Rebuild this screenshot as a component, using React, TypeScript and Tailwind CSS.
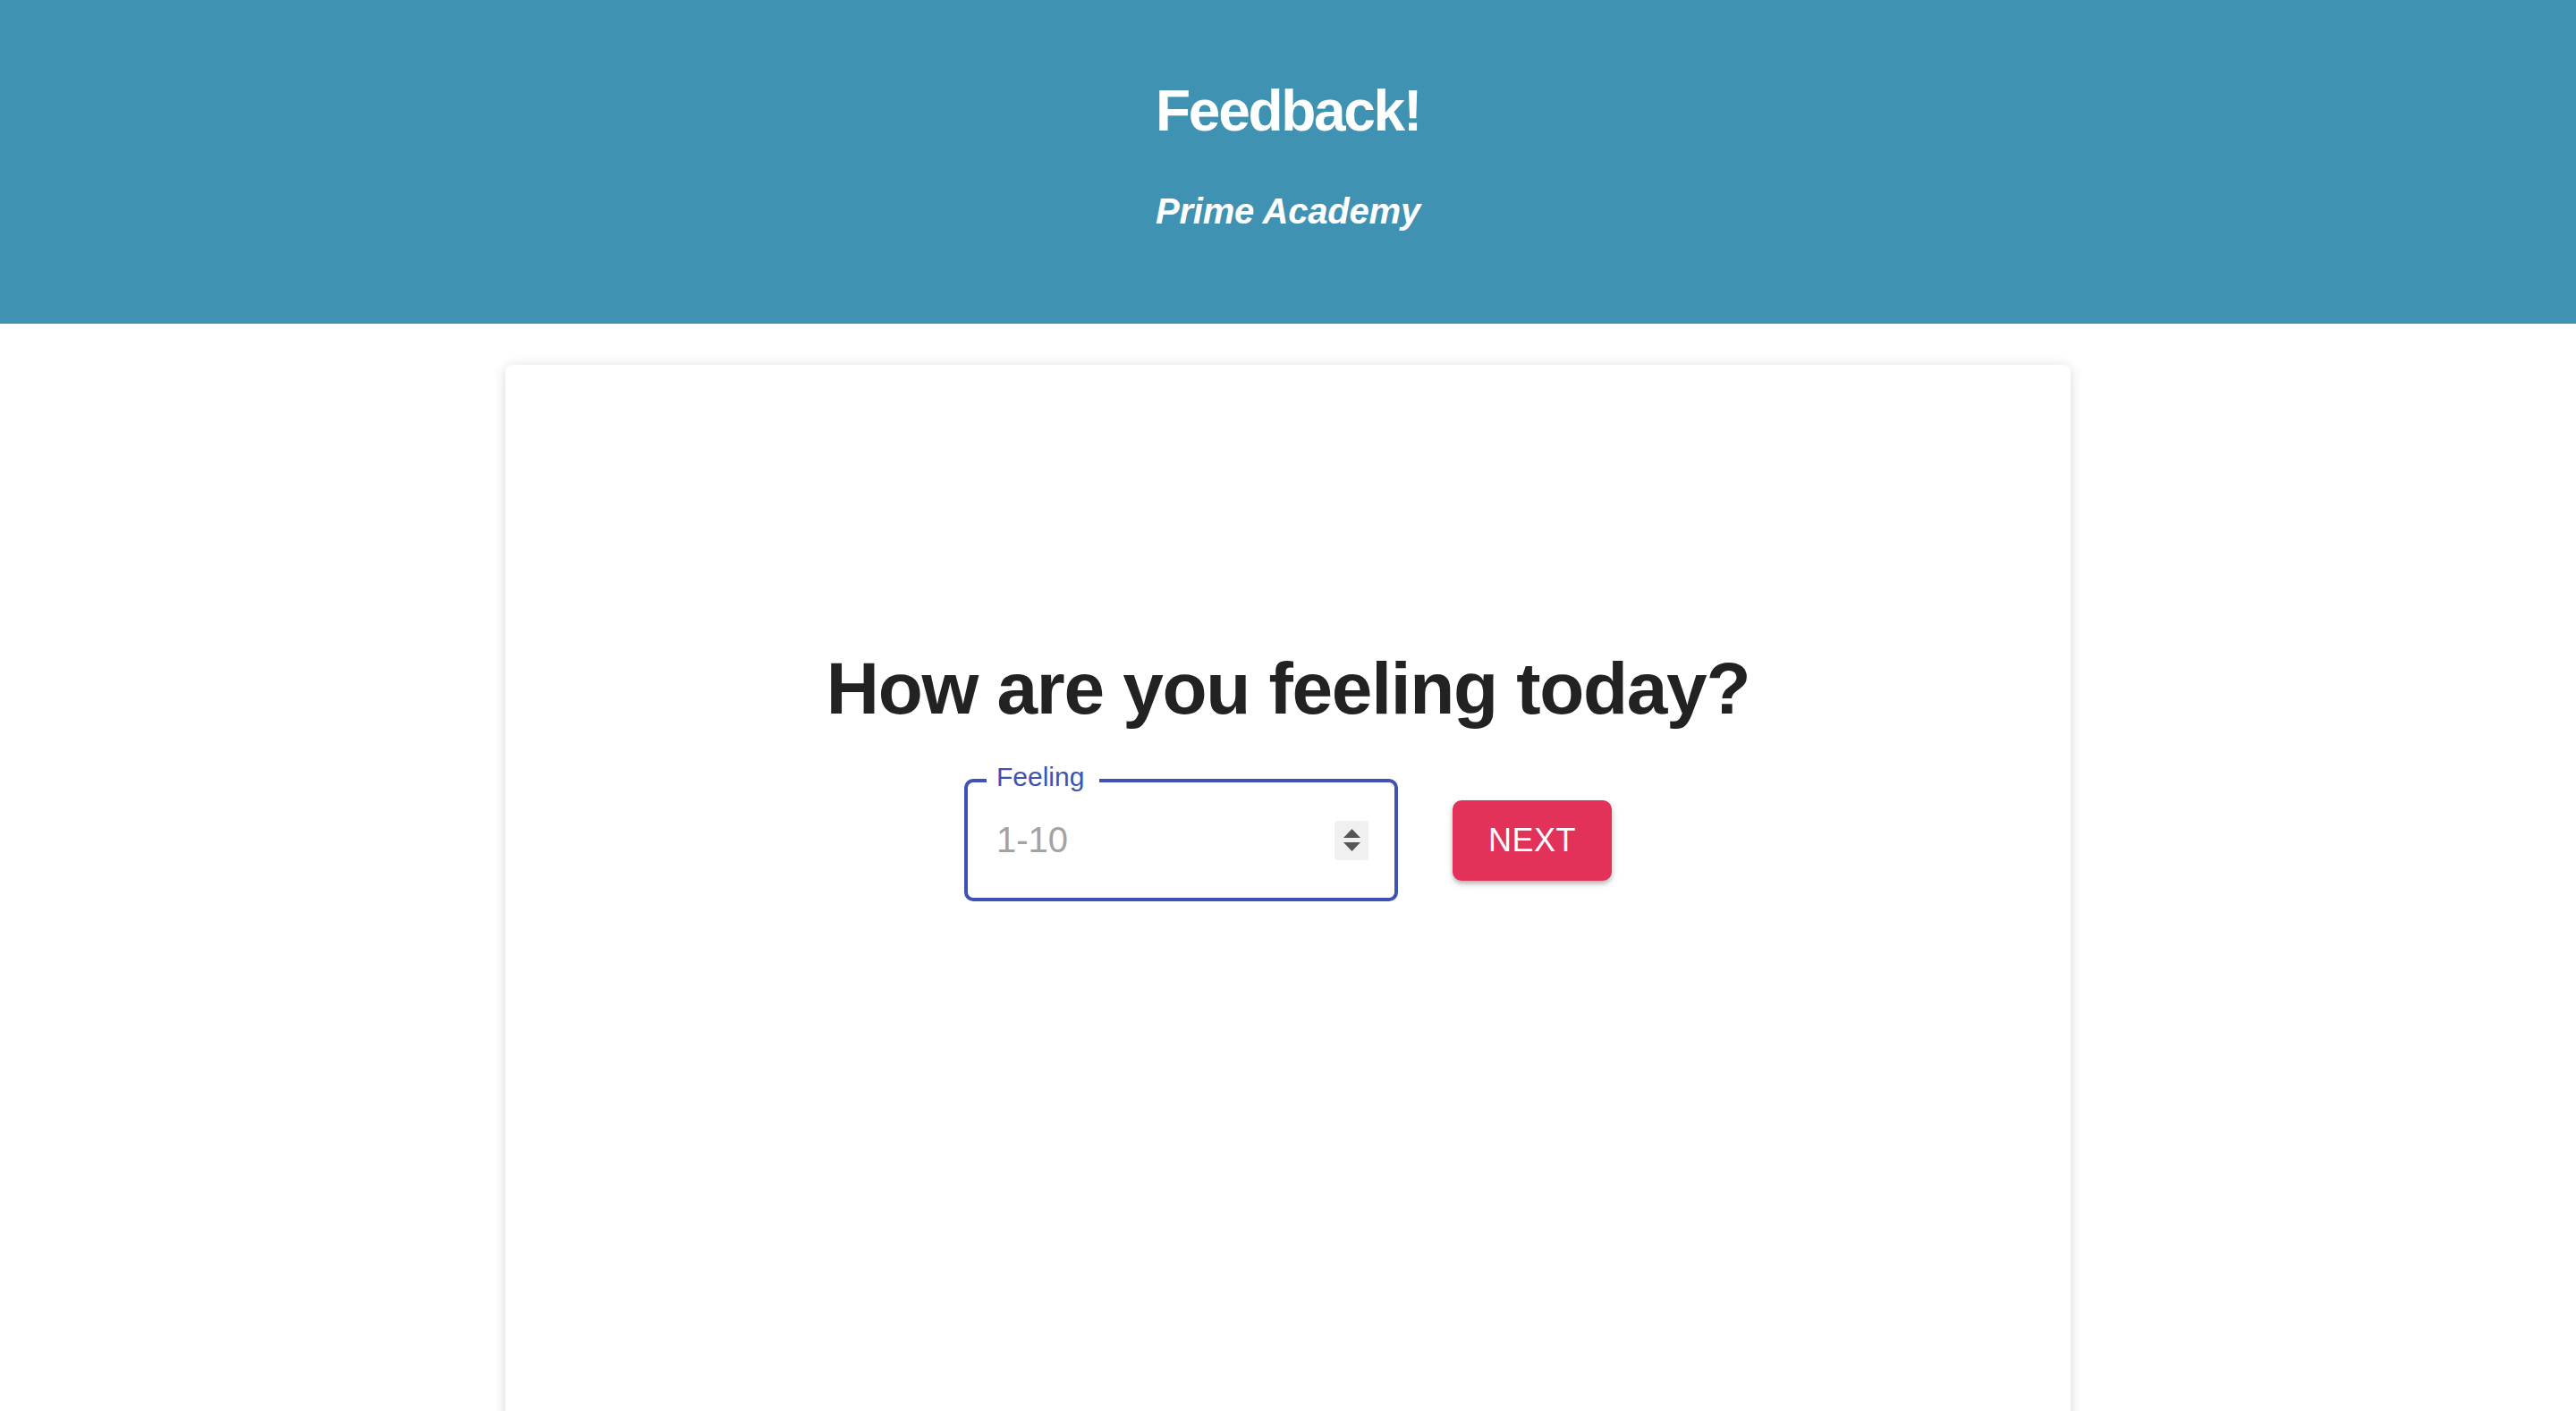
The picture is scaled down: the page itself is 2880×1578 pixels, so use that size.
export default function App() {
  return (
    <div className="min-h-screen bg-white font-['Liberation_Sans',Arial,sans-serif]">
      {/* Header */}
      <header className="bg-[#3f92b1] pt-[92px] pb-[106px] flex flex-col items-center text-white">
        <h1 className="text-[64px] leading-none font-bold tracking-[-2.3px]">Feedback!</h1>
        <h4 className="mt-[60px] text-[40px] leading-none font-bold italic tracking-[-0.2px]">Prime Academy</h4>
      </header>

      {/* Card */}
      <main className="flex justify-center pt-[46px]">
        <div className="w-[1750px] min-h-[1200px] bg-white rounded-[8px] shadow-[0_2px_14px_rgba(0,0,0,0.16)] pt-[321px] flex flex-col items-center">
          <h2 className="text-[82px] leading-none font-bold text-[#222222] tracking-[-1.3px]">
            How are you feeling today?
          </h2>

          <div className="mt-[60px] flex items-center gap-[61px]">
            <div className="relative w-[485px] h-[137px] border-[4px] border-[#3f51b5] rounded-[10px] flex items-center pl-[32px] pr-[29px]">
              <span className="absolute left-[21px] top-[-21px] bg-white pl-[11px] pr-[17px] text-[30px] leading-none text-[#3f51b5]">
                Feeling
              </span>
              <input
                type="text"
                placeholder="1-10"
                className="flex-1 min-w-0 text-[40px] leading-none text-[#222] placeholder:text-[#a3a3a3] outline-none bg-transparent"
              />
              <div className="w-[38px] h-[44px] bg-[#f0f0f0] rounded-[3px] flex flex-col items-center justify-center gap-[5px]">
                <svg width="19" height="10" viewBox="0 0 19 10">
                  <path d="M9.5 0 L19 10 L0 10 Z" fill="#555555" />
                </svg>
                <svg width="19" height="10" viewBox="0 0 19 10">
                  <path d="M0 0 L19 0 L9.5 10 Z" fill="#555555" />
                </svg>
              </div>
            </div>

            <button className="w-[178px] h-[90px] bg-[#e2325a] rounded-[10px] text-white text-[36px] leading-none tracking-[0.5px] shadow-[0_3px_4px_rgba(0,0,0,0.2),0_4px_10px_rgba(0,0,0,0.12)]">
              NEXT
            </button>
          </div>
        </div>
      </main>
    </div>
  );
}
